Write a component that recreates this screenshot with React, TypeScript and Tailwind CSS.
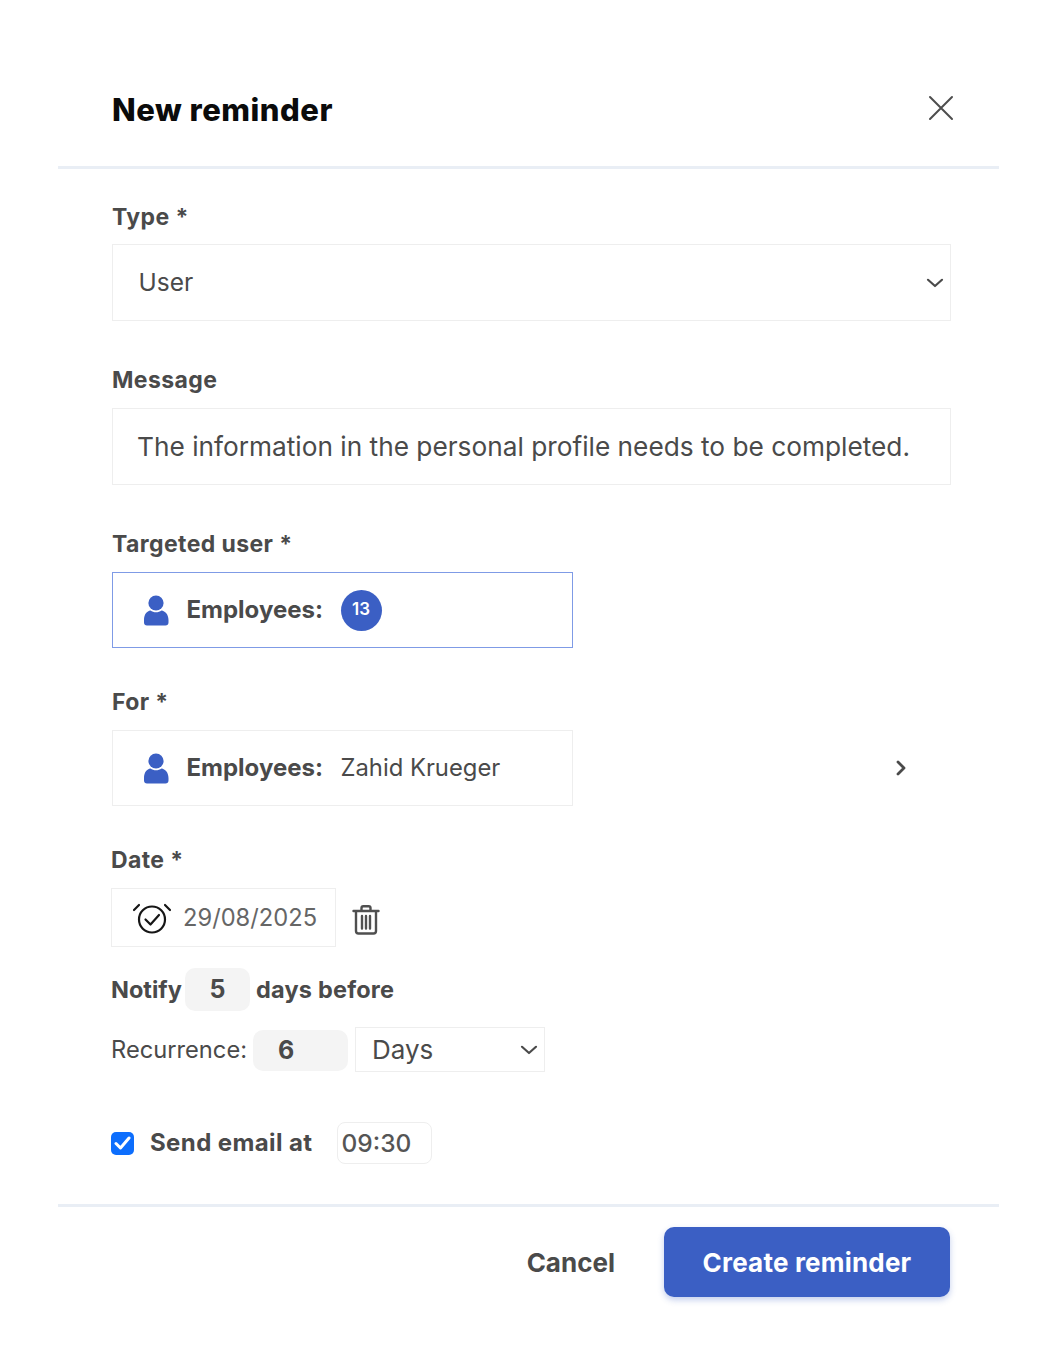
import React from "react";

const User = () => (
  <svg width="26" height="31" viewBox="0 0 26 31" className="shrink-0">
    <circle cx="13" cy="8" r="7.6" fill="#3b5fc4" />
    <path d="M1 25c0-6 3-9 6.500-9.600 3 2.400 8 2.400 11 0C22 16 25.500 19 25.500 25v2.500c0 1.800-1.200 3-3 3H4c-1.800 0-3-1.200-3-3z" fill="#3b5fc4" />
  </svg>
);

const Chevron = ({ className = "" }: { className?: string }) => (
  <svg width="18" height="10" viewBox="0 0 18 10" fill="none" stroke="#4a4a4a" strokeWidth="2.200" strokeLinecap="round" strokeLinejoin="round" className={className}>
    <path d="M2 1.800 9 8l7-6.200" />
  </svg>
);

const Label = ({ children }: { children: React.ReactNode }) => (
  <div className="h-[28px] text-[23px] leading-[28px] font-bold text-[#4a4a4a] tracking-[0.4px]">{children}</div>
);

export default function App() {
  return (
    <div className="w-[1062px] h-[1370px] bg-white font-['Inter','Noto_Sans',sans-serif] text-[#4a4a4a] pt-[90px]">
      <div className="ml-[112px] mr-[108px] flex justify-between items-start h-[76px]">
        <h1 className="text-[31px] leading-[40px] font-extrabold text-[#0b0b0b] tracking-[0.5px]">New reminder</h1>
        <svg width="26" height="26" viewBox="0 0 26 26" fill="none" stroke="#4d4d4d" strokeWidth="2" strokeLinecap="round" className="mt-[5px]">
          <path d="M2 2l22 22M24 2 2 24" />
        </svg>
      </div>
      <div className="ml-[58px] w-[941px] h-[3px] bg-[#e9eef5]" />

      <div className="pl-[112px] pt-[34px]">
        <Label>Type *</Label>
        <div className="mt-[13px] w-[839px] h-[77px] border-[1.5px] border-[#eeeeee] flex items-center justify-between pl-[25.500px] pr-[6px] text-[24.500px]">
          <span>User</span>
          <Chevron />
        </div>

        <div className="mt-[45px]"><Label>Message</Label></div>
        <div className="mt-[14px] w-[839px] h-[77px] border-[1.5px] border-[#eeeeee] flex items-center pl-[24px] text-[26.250px] whitespace-nowrap">
          The information in the personal profile needs to be completed.
        </div>

        <div className="mt-[45px]"><Label>Targeted user *</Label></div>
        <div className="mt-[14px] w-[461px] h-[76px] border-[1.5px] border-[#7f9be6] flex items-center pl-[29.500px]">
          <User />
          <span className="ml-[18px] w-[154px] text-[24px] font-bold whitespace-nowrap">Employees:</span>
          <span className="w-[41px] h-[41px] rounded-full bg-[#3b5fc4] text-white text-[17px] font-semibold flex items-center justify-center">13</span>
        </div>

        <div className="mt-[40px]"><Label>For *</Label></div>
        <div className="flex items-center mt-[14px]">
          <div className="w-[461px] h-[76px] border-[1.5px] border-[#eeeeee] flex items-center pl-[29.500px]">
            <User />
            <span className="ml-[18px] w-[154px] text-[24px] font-bold whitespace-nowrap">Employees:</span>
            <span className="text-[23.800px]">Zahid Krueger</span>
          </div>
          <svg width="12" height="18" viewBox="0 0 12 18" fill="none" stroke="#4a4a4a" strokeWidth="2.800" strokeLinecap="round" strokeLinejoin="round" className="ml-[322px]">
            <path d="M3 3l6 6-6 6" />
          </svg>
        </div>
      </div>

      <div className="pl-[111px] pt-[40px]">
        <Label>Date *</Label>
        <div className="flex items-center mt-[14px]">
          <div className="w-[225px] h-[59px] border-[1.5px] border-[#eeeeee] flex items-center pl-[20px] gap-[11px]">
            <svg width="40" height="32" viewBox="0 0 40 32" fill="none" stroke="#161616" strokeWidth="2.200" strokeLinecap="round" strokeLinejoin="round" className="shrink-0 mt-[1px]">
              <circle cx="20" cy="17.500" r="13" />
              <path d="m13.500 17.500 5 5L27 13M2 8l5-5M38 8l-5-5" />
            </svg>
            <span className="text-[23.700px] text-[#666]">29/08/2025</span>
          </div>
          <svg width="28" height="30" viewBox="0 0 28 30" fill="none" stroke="#4f4f4f" strokeWidth="2.400" strokeLinecap="round" strokeLinejoin="round" className="ml-[16px] mt-[5px]">
            <path d="M1.500 6h25M9.500 6V3c0-1 .8-1.800 1.800-1.800h5.400c1 0 1.800.8 1.800 1.800v3M4 6v20c0 1.500 1 2.500 2.500 2.500h15c1.500 0 2.500-1 2.500-2.500V6M10 11v12.500M14 11v12.500M18 11v12.500" />
          </svg>
        </div>

        <div className="flex items-center mt-[21px] h-[43px] text-[23.500px] font-bold">
          <span className="w-[74px]">Notify</span>
          <span className="w-[65px] h-[43px] rounded-[10px] bg-[#f4f4f4] flex items-center justify-center text-[25px] font-bold">5</span>
          <span className="ml-[6px] tracking-[0.2px]">days before</span>
        </div>

        <div className="flex items-center mt-[16px] h-[45px]">
          <span className="text-[23.700px] w-[142px] whitespace-nowrap">Recurrence:</span>
          <span className="w-[95px] h-[41px] rounded-[10px] bg-[#f4f4f4] flex items-center pl-[25px] text-[25px] font-bold mt-[2px]">6</span>
          <div className="ml-[7px] w-[190px] h-[45px] border-[1.5px] border-[#eeeeee] flex items-center justify-between pl-[16px] pr-[6px] text-[26px]">
            <span>Days</span>
            <Chevron />
          </div>
        </div>

        <div className="flex items-center mt-[50px] h-[42px]">
          <span className="w-[23px] h-[23px] rounded-[5px] bg-[#0d6efd] flex items-center justify-center shrink-0">
            <svg width="17" height="14" viewBox="0 0 17 14" fill="none" stroke="#fff" strokeWidth="3" strokeLinecap="round" strokeLinejoin="round">
              <path d="m2 7.500 4.500 4.500L15 2" />
            </svg>
          </span>
          <span className="ml-[16px] w-[187px] text-[24px] font-bold tracking-[0.4px] whitespace-nowrap">Send email at</span>
          <span className="w-[95px] h-[42px] rounded-[8px] border-[1.5px] border-[#eeeeee] flex items-center pl-[3.500px] text-[24.500px] text-[#555] font-medium">09:30</span>
        </div>
      </div>

      <div className="ml-[58px] mt-[40px] w-[941px] h-[3px] bg-[#e9eef5]" />

      <div className="flex items-center justify-end mr-[112px] mt-[20px]">
        <span className="text-[26px] font-bold mr-[49px]">Cancel</span>
        <button className="w-[286px] h-[70px] rounded-[10px] bg-[#3b5fc4] text-white text-[26px] font-bold tracking-[0.2px] shadow-[0_3px_6px_rgba(59,95,196,0.3)]">Create reminder</button>
      </div>
    </div>
  );
}
